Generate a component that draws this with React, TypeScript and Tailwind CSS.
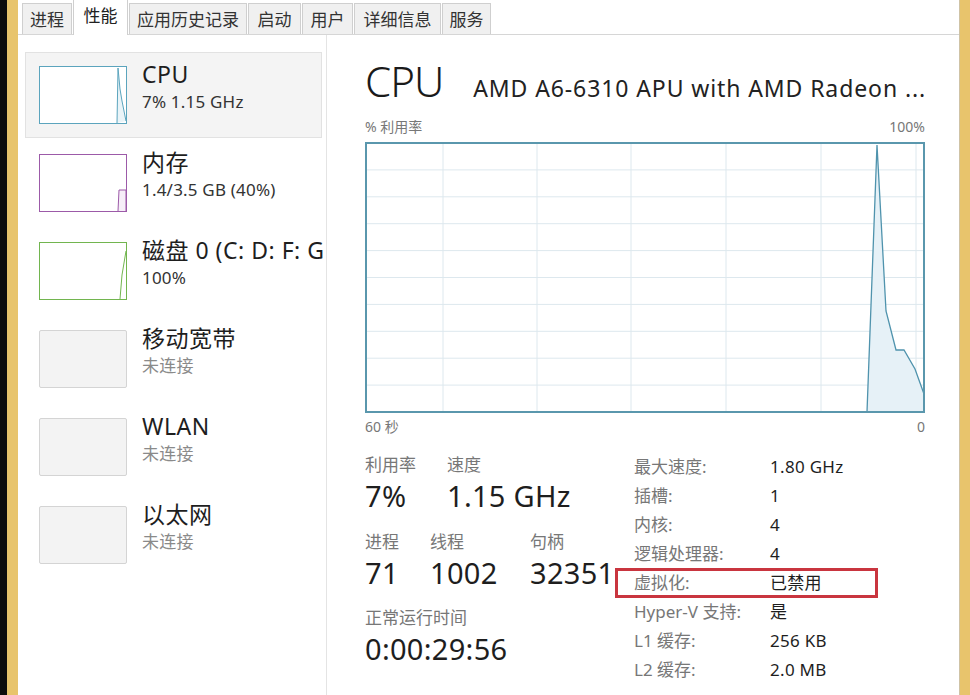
import React from "react";

const font = { fontFamily: '"Noto Sans", "Noto Sans CJK SC", sans-serif' };

const tabs: [string, string][] = [
  ["进程", "w-[50px]"],
  ["性能", "w-[55px]"],
  ["应用历史记录", "w-[118px]"],
  ["启动", "w-[53px]"],
  ["用户", "w-[51px]"],
  ["详细信息", "w-[87px]"],
  ["服务", "w-[49px]"],
];

type Item = { title: string; sub: string; kind: "cpu" | "mem" | "disk" | "none" };

const items: Item[] = [
  { title: "CPU", sub: "7% 1.15 GHz", kind: "cpu" },
  { title: "内存", sub: "1.4/3.5 GB (40%)", kind: "mem" },
  { title: "磁盘 0 (C: D: F: G", sub: "100%", kind: "disk" },
  { title: "移动宽带", sub: "未连接", kind: "none" },
  { title: "WLAN", sub: "未连接", kind: "none" },
  { title: "以太网", sub: "未连接", kind: "none" },
];

function Thumb({ kind }: { kind: Item["kind"] }) {
  if (kind === "none") {
    return <div className="h-[58px] w-[88px] shrink-0 rounded-[2px] border border-[#d4d4d4] bg-[#f3f3f3]" />;
  }
  const border =
    kind === "cpu" ? "border-[#5ba4bd]" : kind === "mem" ? "border-[#9c5aa8]" : "border-[#72b54f]";
  return (
    <div className={`h-[58px] w-[88px] shrink-0 border ${border} bg-white`}>
      <svg width="86" height="56" viewBox="0 0 86 56">
        {kind === "cpu" && (
          <polyline points="77,56 78,1 80,22 82,34 86,54" fill="#eaf4f8" stroke="#5ba4bd" strokeWidth="1" />
        )}
        {kind === "mem" && (
          <polyline points="78,56 79,35 86,35 86,56" fill="#f6eef8" stroke="#9c5aa8" strokeWidth="1" />
        )}
        {kind === "disk" && <polyline points="80,56 82,32 86,8" fill="none" stroke="#72b54f" strokeWidth="1" />}
      </svg>
    </div>
  );
}

function Chart() {
  const w = 558;
  const h = 269;
  const rows = Array.from({ length: 9 }, (_, i) => ((i + 1) * h) / 10);
  const cols = [77, 171, 265, 360, 455, 550];
  const pts = "501,269 511,2 520,168 530,207 538,207 549,226 558,251";
  return (
    <svg width={w + 2} height={h + 2} viewBox={`-1 -1 ${w + 2} ${h + 2}`} className="block">
      <rect x="0" y="0" width={w} height={h} fill="#ffffff" />
      {rows.map((y) => (
        <line key={y} x1="0" x2={w} y1={y} y2={y} stroke="#dde8ee" strokeWidth="1" />
      ))}
      {cols.map((x) => (
        <line key={x} x1={x} x2={x} y1="0" y2={h} stroke="#dde8ee" strokeWidth="1" />
      ))}
      <polygon points={`${pts} 558,269`} fill="#e6f1f7" />
      <polyline points={pts} fill="none" stroke="#4f93ad" strokeWidth="1.3" />
      <rect x="0" y="0" width={w} height={h} fill="none" stroke="#5a97ad" strokeWidth="2" />
    </svg>
  );
}

const specs: [string, string][] = [
  ["最大速度:", "1.80 GHz"],
  ["插槽:", "1"],
  ["内核:", "4"],
  ["逻辑处理器:", "4"],
  ["虚拟化:", "已禁用"],
  ["Hyper-V 支持:", "是"],
  ["L1 缓存:", "256 KB"],
  ["L2 缓存:", "2.0 MB"],
];

function Stat({ label, value, w }: { label: string; value: string; w?: string }) {
  return (
    <div className={w}>
      <div className="text-[17px] leading-[22px] text-[#777]">{label}</div>
      <div className="text-[29px] leading-[40px] tracking-[0.3px] text-[#1e1e1e]">{value}</div>
    </div>
  );
}

export default function App() {
  return (
    <div className="flex h-[695px] w-[970px] overflow-hidden bg-white text-[#1e1e1e]" style={font}>
      <div className="w-[7px] shrink-0 bg-[#0d0d0d]" />
      <div className="w-[11px] shrink-0 bg-[#e8c46c]" />

      <div className="flex min-w-0 flex-1 flex-col">
        {/* tab strip */}
        <div className="flex h-[35px] shrink-0 items-end gap-[1px] border-b border-[#d6d6d6] pl-[4px]">
          {tabs.map(([t, w], i) =>
            i === 1 ? (
              <div
                key={t}
                className={`relative -mb-px flex h-[36px] ${w} items-center justify-center border border-b-0 border-[#cfcfcf] bg-white pb-[4px] text-[17px] leading-none text-[#222]`}
              >
                {t}
              </div>
            ) : (
              <div
                key={t}
                className={`flex h-[31px] ${w} items-center justify-center border border-b-0 border-[#cfcfcf] bg-[#f0f0f0] text-[17px] leading-none text-[#333]`}
              >
                {t}
              </div>
            )
          )}
        </div>

        <div className="flex min-h-0 flex-1">
          {/* sidebar */}
          <div className="w-[309px] shrink-0 overflow-hidden border-r border-[#e4e4e4] pt-[17px]">
            {items.map((it, i) => (
              <div
                key={it.title}
                className={`mb-[2px] ml-[7px] flex h-[86px] w-[297px] gap-[15px] pl-[13px] pt-[13px] ${
                  i === 0 ? "border border-[#e2e2e2] bg-[#f4f4f4]" : "border border-transparent"
                }`}
              >
                <Thumb kind={it.kind} />
                <div className="-mt-[8px] min-w-0 whitespace-nowrap">
                  <div className="text-[23px] leading-[32px] tracking-[0.5px] text-[#1e1e1e]">{it.title}</div>
                  <div
                    className={`text-[17px] leading-[24px] tracking-[0.2px] ${
                      it.kind === "none" ? "text-[#8a8a8a]" : "text-[#333]"
                    }`}
                  >
                    {it.sub}
                  </div>
                </div>
              </div>
            ))}
          </div>

          {/* main panel */}
          <div className="min-w-0 flex-1 pl-[38px] pr-[34px]">
            <div className="mt-[20px] flex items-baseline whitespace-nowrap">
              <span className="text-[42px] font-light leading-[52px] tracking-[-1px] text-[#1a1a1a]">CPU</span>
              <span className="ml-[30px] text-[23px] leading-[30px] tracking-[0.9px] text-[#222]">
                AMD A6-6310 APU with AMD Radeon ...
              </span>
            </div>
            <div className="mt-[11px] flex w-[560px] justify-between text-[14px] leading-[18px] text-[#777]">
              <span>% 利用率</span>
              <span>100%</span>
            </div>
            <div className="mt-[6px]">
              <Chart />
            </div>
            <div className="mt-[5px] flex w-[560px] justify-between text-[14px] leading-[18px] text-[#777]">
              <span>60 秒</span>
              <span>0</span>
            </div>

            <div className="mt-[18px] flex">
              <div className="w-[269px] shrink-0 whitespace-nowrap">
                <div className="flex">
                  <Stat label="利用率" value="7%" w="w-[82px]" />
                  <Stat label="速度" value="1.15 GHz" />
                </div>
                <div className="mt-[15px] flex">
                  <Stat label="进程" value="71" w="w-[65px]" />
                  <Stat label="线程" value="1002" w="w-[100px]" />
                  <Stat label="句柄" value="32351" />
                </div>
                <div className="mt-[14px]">
                  <Stat label="正常运行时间" value="0:00:29:56" />
                </div>
              </div>

              <div className="-mt-[2px] whitespace-nowrap">
                {specs.map(([k, v]) => (
                  <div key={k} className="relative flex h-[29px] items-center text-[17px]">
                    {k === "虚拟化:" && (
                      <div className="absolute -left-[19px] top-[0px] h-[30px] w-[263px] border-[3px] border-[#c9353f]" />
                    )}
                    <span className="w-[136px] text-[#777]">{k}</span>
                    <span className="tracking-[0.3px] text-[#1e1e1e]">{v}</span>
                  </div>
                ))}
              </div>
            </div>
          </div>
        </div>
      </div>

      <div className="w-px shrink-0 bg-[#cfc3a6]" />
      <div className="w-[10px] shrink-0 bg-[#e8c46c]" />
    </div>
  );
}
